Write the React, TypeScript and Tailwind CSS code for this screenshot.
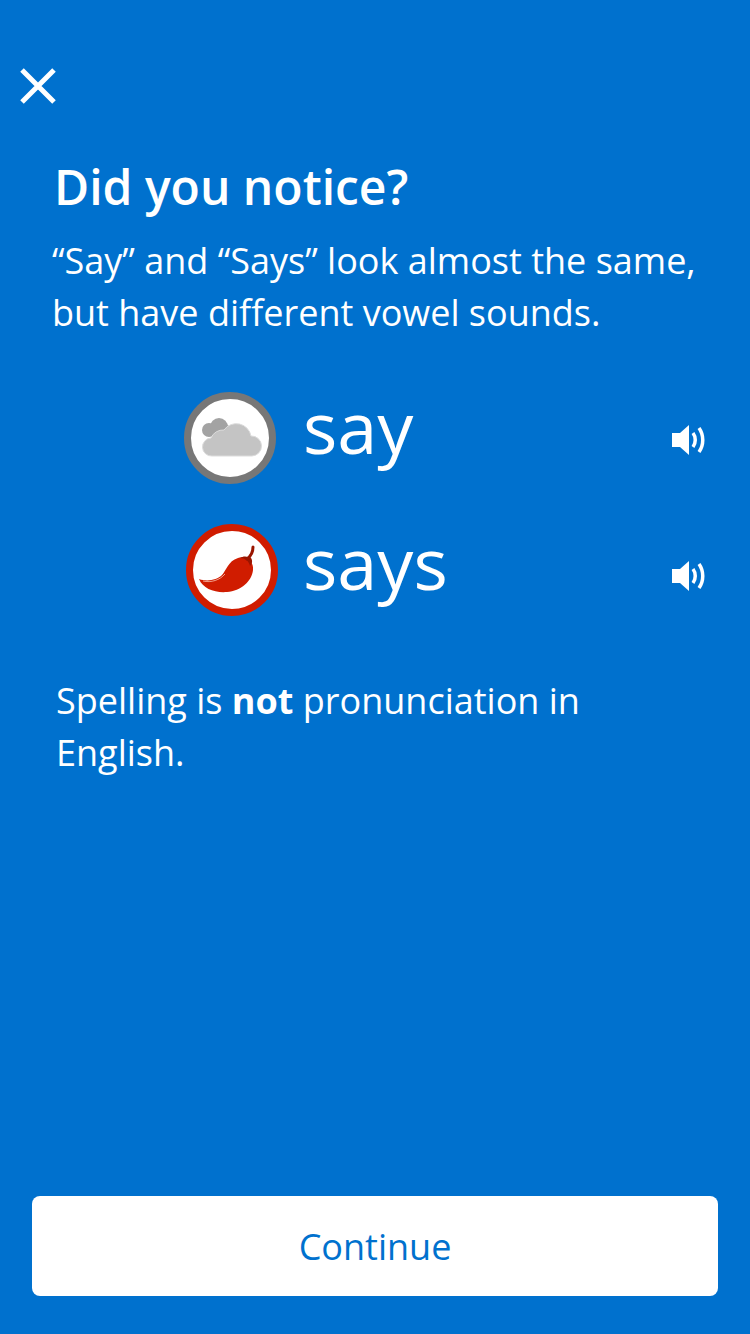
function Speaker() {
  return (
    <svg width="34" height="30" viewBox="0 0 34 30">
      <path d="M1 8h8L18 0v30L9 22H1z" fill="white" />
      <path d="M22 8c3 4 3 10 0 14M28 3c5 7 5 17 0 24" fill="none" stroke="white" strokeWidth="3.5" />
    </svg>
  );
}

function Cloud() {
  return (
    <div className="w-[92px] h-[92px] shrink-0 rounded-full border-[7px] border-[#777] bg-white">
      <svg width="78" height="78" viewBox="0 0 78 78">
        <g fill="#a3a3a3">
          <circle cx="18" cy="31" r="7" />
          <circle cx="28" cy="28" r="9" />
          <circle cx="35" cy="32" r="6" />
        </g>
        <path d="M21 57a9 9 0 0 1-1-18 13 13 0 0 1 13-8 15 15 0 0 1 27 6 10 10 0 0 1 1 20z" fill="#c4c4c4" stroke="#dcdcdc" strokeWidth="1" />
      </svg>
    </div>
  );
}

function Chili() {
  return (
    <div className="w-[92px] h-[92px] shrink-0 rounded-full border-[7px] border-[#d01c00] bg-white">
      <svg width="78" height="78" viewBox="0 0 78 78">
        <path d="M6 48C14 51 24 49 29 44 33 40 35 30 45 27 54 25 61 31 60 39 59 50 48 60 34 61 22 62 10 58 6 48z" fill="#d01c00" />
        <path d="M10 50C18 52 27 49 32 43" fill="none" stroke="#f2a08c" strokeWidth="1" />
        <path d="M47 27C52 27 56 30 57 35 59 33 60 30 58 27 54 25 50 25 47 27z" fill="#9a1500" />
        <path d="M54 28C58 25 60 22 60 16" fill="none" stroke="#9a1500" strokeWidth="3" strokeLinecap="round" />
      </svg>
    </div>
  );
}

export default function App() {
  return (
    <div className="w-[750px] h-[1334px] bg-[#0071ce] text-white flex flex-col font-['Open_Sans',sans-serif]">
      <div className="pt-[68px] pl-[20px]">
        <svg width="36" height="36" viewBox="0 0 36 36" className="block">
          <path d="M2 2l32 32M34 2L2 34" stroke="white" strokeWidth="5" />
        </svg>
      </div>
      <h1 className="mt-[52px] ml-[54px] text-[48px] leading-[62px] font-semibold">Did you notice?</h1>
      <p className="mt-[17px] ml-[52px] text-[36px] leading-[52px]">
        “Say” and “Says” look almost the same,<br />but have different vowel sounds.
      </p>
      <div className="mt-[53px] flex items-center h-[92px] pl-[184px] pr-[45px]">
        <Cloud />
        <span className="ml-[27px] mb-[24px] text-[72px] leading-[92px] flex-1">say</span>
        <div className="mt-[4px]"><Speaker /></div>
      </div>
      <div className="mt-[40px] flex items-center h-[92px] pl-[186px] pr-[45px]">
        <Chili />
        <span className="ml-[25px] mb-[16px] text-[72px] leading-[92px] flex-1">says</span>
        <div className="mt-[12px]"><Speaker /></div>
      </div>
      <p className="mt-[59px] ml-[56px] text-[36px] leading-[52px]">
        Spelling is <b>not</b> pronunciation in<br />English.
      </p>
      <button className="mt-auto mb-[38px] mx-[32px] h-[100px] pt-[2px] rounded-[8px] bg-white text-[#0071ce] text-[36px]">Continue</button>
    </div>
  );
}
